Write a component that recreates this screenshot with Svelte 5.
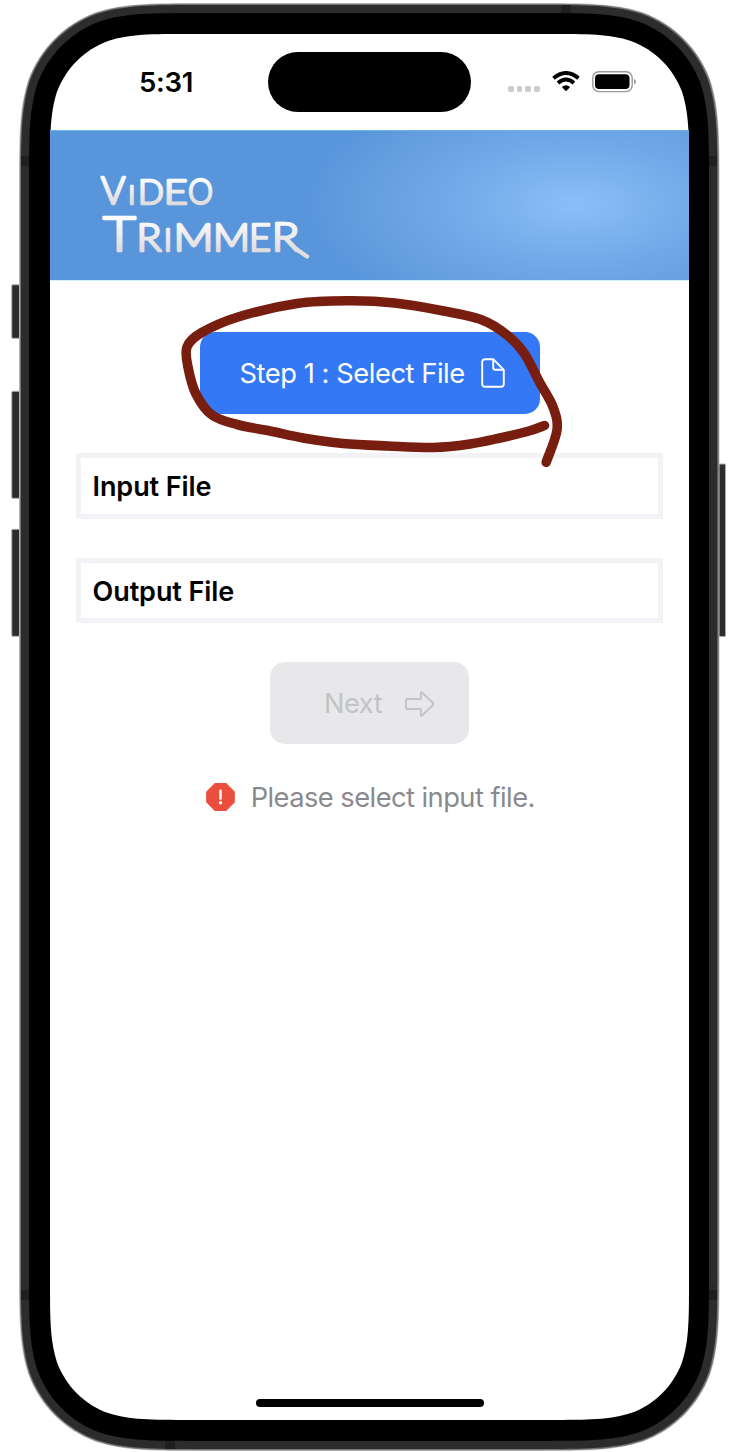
<script>
  // Rounded rectangle with continuous-curvature corners
  function smooth(x, y, w, h, r) {
    const corner = [
      [1.52866, 0], [1.08849, 0], [0.86841, 0], [0.63149, 0.07491],
      [0.37282, 0.16906], [0.16906, 0.37282], [0.07491, 0.63149],
      [0, 0.86841], [0, 1.08849], [0, 1.52866]
    ].map(([a, b]) => [a * r, b * r]);
    const join = (pts, lead) =>
      `${lead}${pts[0]} C${pts[1]} ${pts[2]} ${pts[3]} C${pts[4]} ${pts[5]} ${pts[6]} C${pts[7]} ${pts[8]} ${pts[9]}`;
    const tl = [...corner].reverse().map(([a, b]) => [x + a, y + b]);
    const tr = corner.map(([a, b]) => [x + w - a, y + b]);
    const br = [...corner].reverse().map(([a, b]) => [x + w - a, y + h - b]);
    const bl = corner.map(([a, b]) => [x + a, y + h - b]);
    return join(tl, 'M') + join(tr, 'L') + join(br, 'L') + join(bl, 'L') + 'Z';
  }

  // Freehand stroke passing through each point
  function freehand(p) {
    let d = `M${p[0]}`;
    for (let i = 0; i < p.length - 1; i++) {
      const a = p[i - 1] ?? p[i], b = p[i], c = p[i + 1], e = p[i + 2] ?? c;
      d += `C${b[0] + (c[0] - a[0]) / 6},${b[1] + (c[1] - a[1]) / 6} ${c[0] - (e[0] - b[0]) / 6},${c[1] - (e[1] - b[1]) / 6} ${c}`;
    }
    return d;
  }
  const loop = freehand([
    [544.5, 425.5], [529, 431], [500, 438], [470, 444], [434, 447.5], [388, 446], [343, 443.5],
    [303, 438], [270, 431], [237, 424.5], [212, 415], [196, 394], [188, 367], [187, 347], [201, 333],
    [238, 317], [297, 303.5], [350, 300.8], [395, 303], [441, 310.5], [482, 320], [507, 335],
    [524, 353], [540, 383], [553, 407], [557, 430], [546.2, 462.3]
  ]);
  const fields = ['Input File', 'Output File'];
</script>

<div class="phone">
  <svg class="frame" width="738" height="1452" viewBox="0 0 738 1452" aria-hidden="true">
    <g fill="#2c2c2c" stroke="#aaa" stroke-width="1">
      <rect x="11.8" y="284.8" width="12" height="53.5" rx="1" />
      <rect x="11.8" y="391.3" width="12" height="107" rx="1" />
      <rect x="11.8" y="529.3" width="12" height="107" rx="1" />
      <rect x="712" y="464" width="13.5" height="172.5" rx="1" />
    </g>
    <path d={smooth(19, 3, 700.5, 1448, 122)} fill="#c4c4c4" />
    <path d={smooth(19.8, 3.8, 699, 1446.4, 121)} fill="#747474" />
    <path d={smooth(21, 5, 696.3, 1444, 120)} fill="#2c2c2c" />
    <g fill="#1f1f1f">
      <rect x="21" y="156" width="9" height="10" />
      <rect x="708" y="156" width="9" height="10" />
      <rect x="21" y="1290" width="9" height="10" />
      <rect x="708" y="1290" width="9" height="10" />
      <rect x="561" y="5" width="10" height="9" />
      <rect x="165" y="1440" width="10" height="9" />
    </g>
    <path d={smooth(29, 13, 680, 1428, 112)} fill="#000" />
    <path d={smooth(50, 34, 639, 1386, 92)} fill="#fff" />
  </svg>

  <main class="screen">
    <div class="status">
      <span class="time">5:31</span>
      <span class="island"></span>
      <span class="indicators">
        <span class="dots"><i></i><i></i><i></i><i></i></span>
        <svg width="28" height="21" viewBox="0 0 28 21">
          <g fill="none" stroke="#000" stroke-width="3.9">
            <path d="M1.5 7.2Q14 -3.2 26.5 7.2" />
            <path d="M6 12Q14 5.2 22 12" />
          </g>
          <path d="M9.8 16Q14 12.4 18.2 16L14 20.2Z" />
        </svg>
        <svg class="battery" width="45" height="22" viewBox="0 0 45 22">
          <rect x=".8" y=".8" width="39.4" height="19.8" rx="6" fill="none" stroke="#999" stroke-width="1.4" />
          <rect x="3" y="3.3" width="34.5" height="14.8" rx="4" />
          <path d="M42 7.8Q44 8.8 44 10.7T42 13.6Z" fill="#999" />
        </svg>
      </span>
    </div>

    <header>
      <svg width="230" height="110" viewBox="90 165 230 110" role="img" aria-label="Video Trimmer">
        <defs>
          <linearGradient id="chalk1" gradientUnits="userSpaceOnUse" x1="0" y1="175" x2="0" y2="206">
            <stop offset="0" stop-color="#fff" /><stop offset="1" stop-color="#ded9db" />
          </linearGradient>
          <linearGradient id="chalk2" gradientUnits="userSpaceOnUse" x1="0" y1="215" x2="0" y2="254">
            <stop offset="0" stop-color="#fff" /><stop offset="1" stop-color="#ded9db" />
          </linearGradient>
        </defs>
        <text class="logo" fill="url(#chalk1)" stroke="url(#chalk1)" y="203.8" font-size="34"><tspan x="101" font-size="37">V</tspan><tspan x="128.6" font-size="25">I</tspan><tspan x="138">D</tspan><tspan x="163.8" textLength="24" lengthAdjust="spacingAndGlyphs">E</tspan><tspan x="188" textLength="25" lengthAdjust="spacingAndGlyphs" font-size="35">O</tspan></text>
        <text class="logo" fill="url(#chalk2)" stroke="url(#chalk2)" y="250.500" font-size="37"><tspan x="103" font-size="47" textLength="33" lengthAdjust="spacingAndGlyphs">T</tspan><tspan x="136.5" textLength="25" lengthAdjust="spacingAndGlyphs">R</tspan><tspan x="163.8" font-size="32">I</tspan><tspan x="173.500" textLength="40" lengthAdjust="spacingAndGlyphs">M</tspan><tspan x="213" textLength="37" lengthAdjust="spacingAndGlyphs">M</tspan><tspan x="249" textLength="22" lengthAdjust="spacingAndGlyphs">E</tspan><tspan x="271.500" font-size="40" textLength="28" lengthAdjust="spacingAndGlyphs">R</tspan></text>
        <path d="M295.500 248.500L307 256.500" stroke="#e2dee0" stroke-width="4.2" stroke-linecap="round" />
      </svg>
    </header>

    <section class="content">
      <button class="primary">
        <span class="step">Step 1 : Select File</span>
        <svg width="24" height="30" viewBox="0 0 24 30" fill="none" stroke="#fff" stroke-width="1.9" stroke-linejoin="round">
          <path d="M4 1.2H12.2L22.8 11.8V26Q22.8 28.8 20 28.8H4Q1.2 28.8 1.2 26V4Q1.2 1.2 4 1.2Z" />
          <path d="M12.2 1.2V9.8Q12.2 11.8 14.2 11.8H22.8" />
        </svg>
      </button>
      {#each fields as field}
        <div class="field"><span>{field}</span></div>
      {/each}
      <button class="next" disabled>
        <span>Next</span>
        <svg width="30" height="26" viewBox="0 0 30 26" fill="none" stroke="#c3c3c5" stroke-width="2" stroke-linejoin="round">
          <path d="M3 8.1H15.8V2.2Q15.8 .5 17.2 1.8L28 12Q29 13 28 14L17.2 24.2Q15.8 25.5 15.8 23.8V17.9H3Q1 17.9 1 15.9V10.1Q1 8.1 3 8.1Z" />
        </svg>
      </button>
      <p class="message">
        <svg width="29" height="28" viewBox="0 0 29 28">
          <path d="M9 .7H20L28.2 9V19L20 27.3H9L.8 19V9Z" fill="#ec4e3d" stroke="#ec4e3d" stroke-width="1.2" stroke-linejoin="round" />
          <path d="M14.5 7.8V15.6" stroke="#fff" stroke-width="2.5" stroke-linecap="round" />
          <circle cx="14.5" cy="19.8" r="1.7" fill="#fff" />
        </svg>
        <span>Please select input file.</span>
      </p>
    </section>
    <span class="home"></span>
  </main>

  <svg class="marker" width="400" height="190" viewBox="170 285 400 190" fill="none" aria-hidden="true">
    <path d={loop} stroke="#781e10" stroke-width="9.6" stroke-linecap="round" stroke-linejoin="round" />
  </svg>
</div>

<style>
  :global(body) { margin: 0; background: #fff; }
  .phone {
    position: relative;
    width: 738px;
    height: 1452px;
    box-sizing: border-box;
    padding: 34px 49px 32px 50px;
    overflow: hidden;
    font-family: Inter, "Liberation Sans", sans-serif;
  }
  .frame { position: absolute; inset: 0; }
  .screen {
    position: relative;
    height: 1386px;
    display: flex;
    flex-direction: column;
    align-items: center;
  }
  .status {
    width: 639px;
    height: 96px;
    box-sizing: border-box;
    padding: 18px 53px 0 89px;
    display: grid;
    grid-template-columns: 129px 203px 1fr;
    align-items: start;
  }
  .time { font-size: 27.5px; font-weight: 600; line-height: 60px; letter-spacing: -.3px; }
  .island { height: 60px; border-radius: 30px; background: #000; }
  .indicators { display: flex; height: 60px; align-items: center; padding-left: 37px; }
  .dots { display: flex; gap: 3px; margin: 14px 12px 0 0; }
  .dots i { width: 5.7px; height: 5.7px; border-radius: 2px; background: #ccc; }
  .indicators svg { flex: none; margin-bottom: 1px; }
  .indicators .battery { margin-left: 12px; }
  header {
    width: 639px;
    height: 150px;
    box-sizing: border-box;
    padding: 34px 40px;
    border-top: 1px solid #6db5e6;
    background: radial-gradient(ellipse 272px 128px at 525px 73px, #8bbef8 0%, #7ab2ee 28%, #70a9e9 48%, #66a0e0 72%, #5995db 100%);
    box-shadow: 0 1px #d2f1ff;
  }
  header svg { display: block; }
  .logo { font-family: Lato, sans-serif; font-weight: 300; stroke-width: 2.4px; stroke-linejoin: round; }
  .content {
    width: 587px;
    display: flex;
    flex-direction: column;
    align-items: center;
    padding-top: 52px;
  }
  button { border: 0; font: inherit; display: flex; align-items: center; box-sizing: border-box; border-radius: 15px; }
  .primary { width: 340px; height: 82px; padding: 0 35px 0 40px; justify-content: space-between; background: #3478f6; color: #fff; margin-bottom: 39px; }
  .step, .next span, .message span { font-size: 27.3px; white-space: nowrap; }
  .step { letter-spacing: -.45px; }
  .field {
    width: 587px;
    height: 65.5px;
    box-sizing: border-box;
    border: 5px solid #f2f2f7;
    margin-bottom: 39px;
    padding: 2px 0 0 11.5px;
    display: flex;
    align-items: center;
    font-size: 27px;
    font-weight: 600;
  }
  .field span { letter-spacing: -.07px; }
  .next { width: 199px; height: 82px; padding: 1px 34px 0 54px; justify-content: space-between; background: #e8e8ea; color: #c3c3c5; margin: .4px 0 38.600px; }
  .next span { letter-spacing: -.5px; }
  .message { margin: 0; display: flex; align-items: center; gap: 16px; color: #8a8a8e; height: 29px; padding-left: 1.500px; }
  .message span { letter-spacing: -.55px; }
  .home { width: 228px; height: 8px; border-radius: 4px; background: #000; margin: auto 0 13px; }
  .marker { position: absolute; left: 170px; top: 285px; }
</style>
